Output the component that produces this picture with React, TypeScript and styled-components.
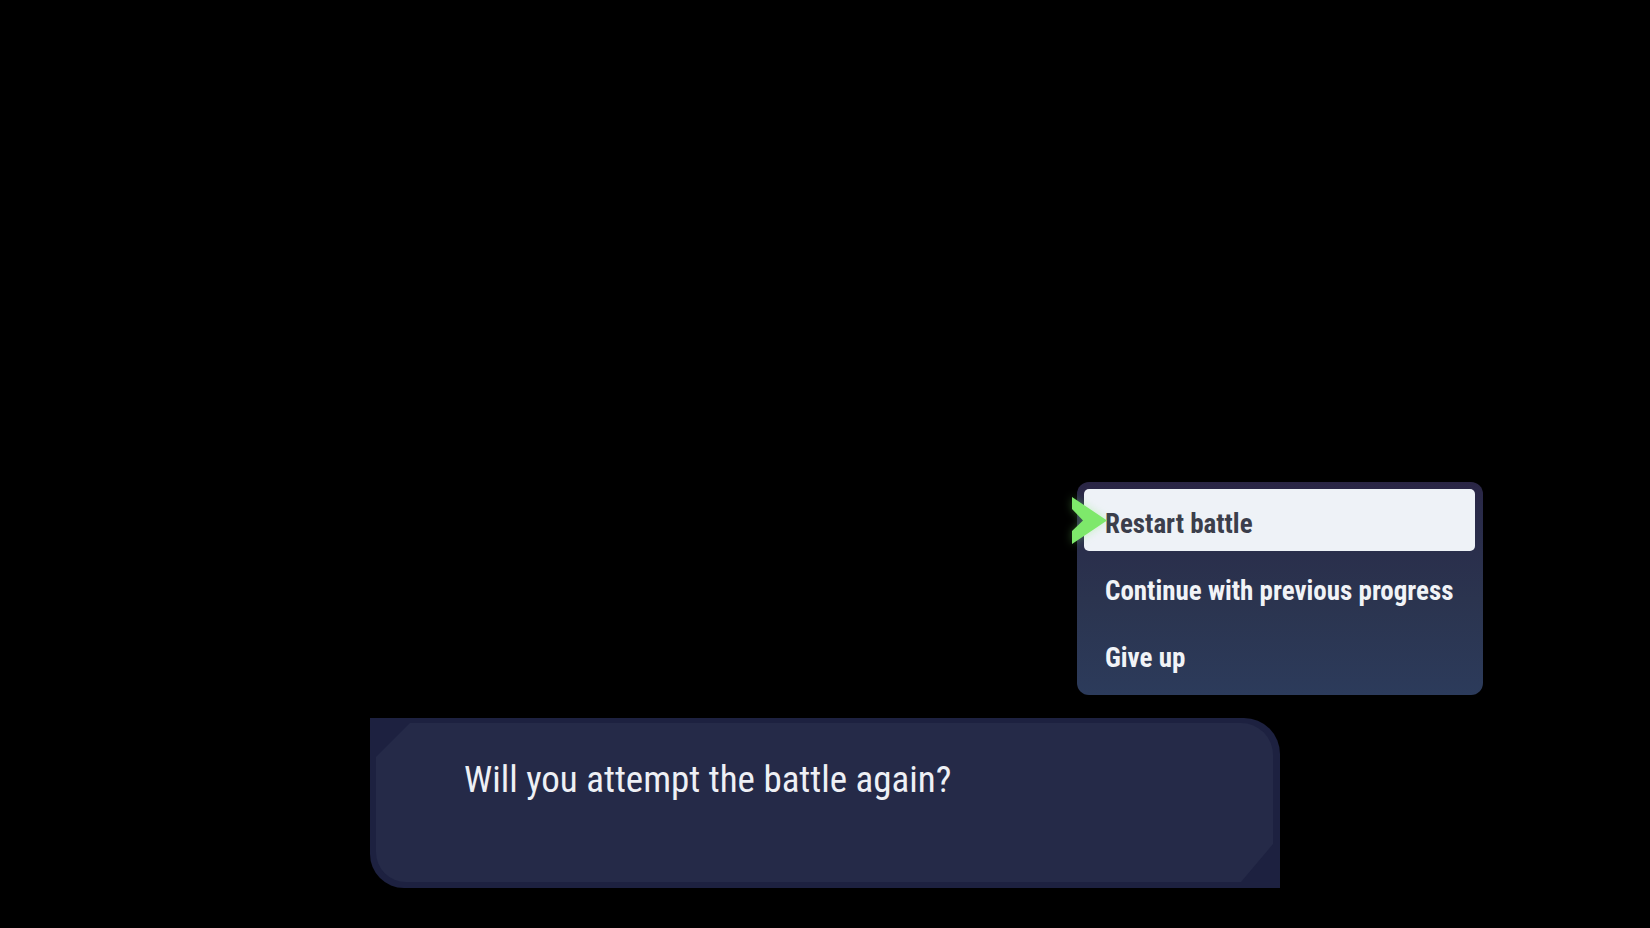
import styled, { createGlobalStyle } from "styled-components";

const GlobalStyle = createGlobalStyle`
  html, body {
    margin: 0;
    background: #000;
  }
`;

const options = [
  { id: "restart", label: "Restart battle" },
  { id: "continue", label: "Continue with previous progress" },
  { id: "give-up", label: "Give up" },
];

const SelectArrow = () => (
  <ArrowIcon viewBox="0 0 35 47" width={35} height={47}>
    <polygon points="0,0 35,23.5 0,47 0,34 11,23.5 0,12" fill="#7ee86b" />
  </ArrowIcon>
);

const App = () => {
  const selected = "restart";

  return (
    <Screen>
      <GlobalStyle />
      <MenuRow>
        <Menu>
          {options.map(({ id, label }) => (
            <Option key={id} $active={id === selected}>
              {id === selected && <SelectArrow />}
              {label}
            </Option>
          ))}
        </Menu>
      </MenuRow>
      <Dialog>
        <DialogInner>
          <DialogText>Will you attempt the battle again?</DialogText>
        </DialogInner>
      </Dialog>
    </Screen>
  );
};

const Screen = styled.div`
  display: flex;
  flex-direction: column;
  justify-content: flex-end;
  gap: 23px;
  height: 100vh;
  padding-bottom: 40px;
  box-sizing: border-box;
  background: #000;
`;

const MenuRow = styled.div`
  display: flex;
  justify-content: flex-end;
  padding-right: 167px;
`;

const Menu = styled.div`
  display: flex;
  flex-direction: column;
  gap: 5px;
  width: 406px;
  padding: 7px 8px 10px 7px;
  box-sizing: border-box;
  border-radius: 12px;
  background: linear-gradient(
    180deg,
    #2a2545 0%,
    #292a49 12%,
    #2b344f 55%,
    #2c3b5b 100%
  );
`;

const Option = styled.div<{ $active: boolean }>`
  position: relative;
  display: flex;
  align-items: center;
  height: 62px;
  padding: 7px 0 0 21px;
  box-sizing: border-box;
  border-radius: 5px;
  background: ${({ $active }) => ($active ? "#eef2f7" : "transparent")};
  color: ${({ $active }) => ($active ? "#3b3e4b" : "#f1f3f7")};
  font-family: "Roboto Condensed", Roboto, sans-serif;
  font-stretch: condensed;
  font-weight: 700;
  font-size: 27px;
`;

const ArrowIcon = styled.svg`
  position: absolute;
  left: -12px;
  top: 8px;
  filter: drop-shadow(0 0 4px rgba(126, 232, 107, 0.35));
`;

const Dialog = styled.div`
  width: 910px;
  height: 170px;
  margin-left: 370px;
  padding: 5px 7px 6px 6px;
  box-sizing: border-box;
  background: #1d2140;
  border-radius: 0 36px 0 34px;
`;

const DialogInner = styled.div`
  height: 100%;
  padding: 35px 0 0 88px;
  box-sizing: border-box;
  background: #252a48;
  border-radius: 0 32px 0 30px;
  clip-path: polygon(
    34px 0,
    100% 0,
    100% calc(100% - 38px),
    calc(100% - 32px) 100%,
    0 100%,
    0 34px
  );
`;

const DialogText = styled.div`
  color: #eef0f5;
  font-family: "Roboto Condensed", Roboto, sans-serif;
  font-stretch: condensed;
  font-weight: 400;
  font-size: 37px;
  line-height: 44px;
`;

export default App;
